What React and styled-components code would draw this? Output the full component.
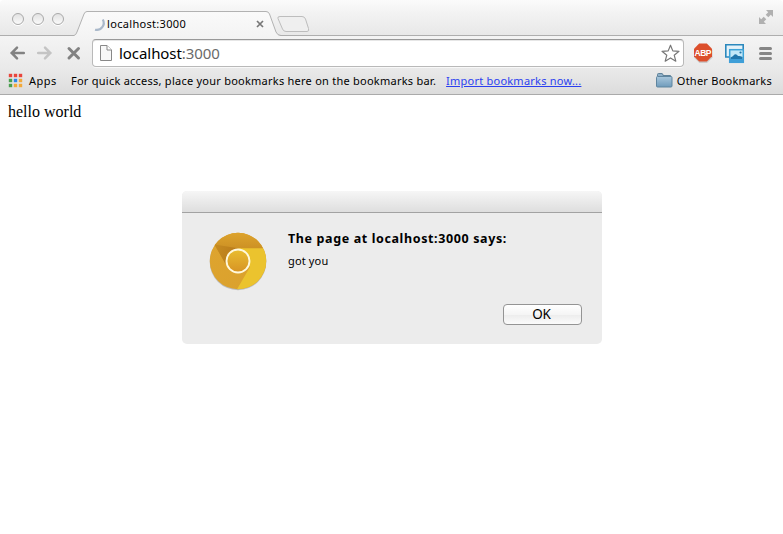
import React from "react";
import styled, { createGlobalStyle } from "styled-components";

const Global = createGlobalStyle`
  * { box-sizing: border-box; }
  html, body { margin: 0; background: #fff; overflow: hidden; }
  svg { display: block; flex: none; overflow: visible; }
`;

const Browser = styled.div`
  position: relative;
  display: flex;
  flex-direction: column;
  width: 783px;
  height: 534px;
  font-family: "Noto Sans", "Open Sans", sans-serif;
  color: #000;
`;

const Label = styled.span`
  font-size: ${(p) => p.$size || 11}px;
  font-weight: ${(p) => p.$weight || 400};
  letter-spacing: ${(p) => p.$track || 0}px;
  line-height: 16px;
  white-space: nowrap;
`;

const TabStrip = styled.header`
  display: flex;
  height: 36px;
  padding: 0 9px 0 12px;
  background: linear-gradient(#fbfbfb, #f3f3f3 35%, #e8e8e8);
  border-bottom: 1px solid #aeaeae;
  border-radius: 4px 4px 0 0;
`;

const WindowButtons = styled.div`
  display: flex;
  gap: 8px;
  padding-top: 13px;
  width: 62px;
`;

const WindowButton = styled.i`
  width: 12px;
  height: 12px;
  border: 1px solid #a9a9a9;
  border-radius: 50%;
  background: linear-gradient(#e2e2e2, #fafafa);
  box-shadow: 0 1px 0 #fff;
`;

const Tab = styled.div`
  position: relative;
  display: flex;
  width: 207px;
  height: 36px;
  padding: 16px 17px 0 19px;
`;

const TabShape = styled.svg`
  position: absolute;
  left: 0;
  top: 0;
`;

const TabContent = styled.div`
  position: relative;
  display: flex;
  width: 100%;
  height: 16px;
  align-items: center;
`;

const TabTitle = styled(Label)`
  flex: 1;
  margin-left: 2px;
`;

const NewTab = styled.svg`
  margin: 15px auto 0 -4px;
`;

const Expand = styled.svg`
  margin-top: 9px;
`;

const Toolbar = styled.div`
  display: flex;
  align-items: center;
  height: 34px;
  padding: 0 11px 0 9px;
  background: linear-gradient(#f4f4f4, #e9e9e9);
`;

const NavButtons = styled.div`
  display: flex;
  gap: 12px;
  width: 83px;
`;

const AddressBar = styled.div`
  display: flex;
  align-items: center;
  width: 592px;
  height: 28px;
  padding: 0 3px 0 7px;
  background: #fff;
  border: 1px solid #b9b9b9;
  border-top-color: #999;
  border-radius: 4px;
  box-shadow: inset 0 1px 0 #e6e6e6, 0 1px 0 #f8f8f8;
`;

const Url = styled(Label)`
  flex: 1;
  margin-left: 7px;
  line-height: 20px;
`;

const Port = styled.span`
  color: #6a6a6a;
`;

const Extensions = styled.div`
  display: flex;
  align-items: center;
  flex: 1;
  padding-left: 9px;
`;

const ExtensionPhotos = styled.svg`
  margin: 1px auto 0 12px;
`;

const BookmarksBar = styled.nav`
  display: flex;
  align-items: center;
  height: 25px;
  padding: 0 11px 3px 9px;
  background: linear-gradient(#e9e9e9, #dcdcdc);
  border-bottom: 1px solid #aaa;
`;

const AppsLabel = styled(Label)`
  width: 42px;
  margin-left: 7px;
`;

const ImportLink = styled.a`
  margin: 0 auto 0 10px;
  font-size: 11px;
  line-height: 16px;
  letter-spacing: ${(p) => p.$track}px;
  color: #2b3ff0;
  text-decoration: underline;
  white-space: nowrap;
`;

const FolderLabel = styled(Label)`
  margin-left: 4px;
`;

const Page = styled.main`
  flex: 1;
  padding: 8px;
  font: 16px/18px "Liberation Serif", serif;
`;

const Dialog = styled.section`
  position: absolute;
  left: 182px;
  top: 191px;
  width: 420px;
  height: 153px;
  background: #ececec;
  border-radius: 5px;
  overflow: hidden;
`;

const DialogTitleBar = styled.div`
  height: 22px;
  background: linear-gradient(#f6f6f6, #dedede);
  border-bottom: 1px solid #a2a2a2;
`;

const DialogBody = styled.div`
  display: flex;
  padding: 18px 20px 0 26px;
`;

const Message = styled.div`
  display: flex;
  flex-direction: column;
  flex: 1;
  gap: 6px;
  margin-left: 20px;
`;

const OkButton = styled.button`
  align-self: flex-end;
  width: 79px;
  height: 21px;
  margin-top: 29px;
  padding: 0 2px 1px 0;
  font: 13.5px/18px "Noto Sans", sans-serif;
  letter-spacing: -0.2px;
  color: #000;
  background: linear-gradient(#fff, #f5f5f5 50%, #ececec 51%, #fbfbfb);
  border: 1px solid #949494;
  border-radius: 4px;
`;

const APP_COLORS = [
  "#e8453c", "#e8453c", "#e8453c",
  "#4a9f4f", "#2f87e8", "#f2a93b",
  "#4a9f4f", "#f2a93b", "#f2a93b",
];

const AppsIcon = () => (
  <svg width="13" height="13">
    {APP_COLORS.map((c, i) => (
      <rect key={i} x={(i % 3) * 5 - 0.2} y={Math.floor(i / 3) * 5 - 0.2} width="3.4" height="3.4" fill={c} />
    ))}
  </svg>
);

const BackIcon = ({ color, flip }) => (
  <svg width="16" height="16" viewBox="0 0 16 16">
    <path
      transform={flip ? "translate(16 0) scale(-1 1)" : undefined}
      d="M8 2.700 2.700 8 8 13.300M3 8H14.800"
      fill="none" stroke={color} strokeWidth="2.500" strokeLinecap="round"
    />
  </svg>
);

const ChromeLogo = () => (
  <svg width="60" height="62" viewBox="0 0 60 62">
    <defs>
      <linearGradient id="top" x1="0" y1="0" x2="0" y2="1">
        <stop offset="0" stopColor="#dfa52d" />
        <stop offset="1" stopColor="#bd801d" />
      </linearGradient>
      <linearGradient id="left" x1="0" y1="0" x2="1" y2="1">
        <stop offset="0" stopColor="#dfa52f" />
        <stop offset="1" stopColor="#d9a02d" />
      </linearGradient>
      <linearGradient id="shade" x1="0" y1="0" x2="1" y2="0.2">
        <stop offset="0" stopColor="#c68c21" />
        <stop offset="1" stopColor="#b97b1a" />
      </linearGradient>
      <linearGradient id="core" x1="0" y1="0" x2="0" y2="1">
        <stop offset="0" stopColor="#e9bd30" />
        <stop offset="1" stopColor="#d79324" />
      </linearGradient>
      <clipPath id="disc"><circle cx="30" cy="30" r="28.2" /></clipPath>
    </defs>
    <circle cx="30" cy="30.9" r="28.3" fill="#000" opacity=".2" />
    <g clipPath="url(#disc)">
      <rect width="60" height="60" fill="url(#left)" />
      <path d="M30 16H60V60H28L42 36Z" fill="#ebc32e" />
      <path d="M0 0H60V17.300H30L17.500 32 6.400 13.500Z" fill="url(#top)" />
      <path d="M6.400 13.500 17.500 33 19 22 30 17.300Z" fill="url(#shade)" />
    </g>
    <circle cx="30" cy="30" r="11.500" fill="url(#core)" stroke="#fff8dc" strokeWidth="1.900" />
  </svg>
);

export default function App() {
  return (
    <>
      <Global />
      <Browser>
        <TabStrip>
          <WindowButtons>
            <WindowButton /><WindowButton /><WindowButton />
          </WindowButtons>
          <Tab>
            <TabShape width="207" height="36">
              <defs>
                <linearGradient id="tab" x1="0" y1="0" x2="0" y2="1">
                  <stop offset="0" stopColor="#fafafa" />
                  <stop offset="1" stopColor="#f4f4f4" />
                </linearGradient>
              </defs>
              <path d="M0 36V35.5Q2 35 3 32L10 14Q11 11.5 13 11.5H192Q194.500 11.500 195.500 14L202 32Q203.500 35.500 206 35.500V36Z" fill="url(#tab)" />
              <path d="M0 35.500Q2 35 3 32L10 14Q11 11.500 13 11.500H192Q194.500 11.500 195.500 14L202 32Q203.500 35.500 207 35.500" fill="none" stroke="#b2b2b2" />
            </TabShape>
            <TabContent>
              <svg width="12" height="16">
                <path d="M9.800 3.500A7 7 0 0 1 2 13.700" fill="none" stroke="#a9b8ca" strokeWidth="2.200" />
              </svg>
              <TabTitle $track={0.32}>localhost:3000</TabTitle>
              <svg width="8" height="8">
                <path d="M1 1 7 7M7 1 1 7" stroke="#777" strokeWidth="1.700" />
              </svg>
            </TabContent>
          </Tab>
          <NewTab width="33" height="18">
            <path d="M3 1.500H25Q27.500 1.500 28.500 4L31.500 13.500Q32.500 16.500 30 16.500H9Q6.500 16.500 5.500 14L1 3.500Q0.200 1.500 3 1.500Z" fill="#efefef" stroke="#bdbdbd" />
          </NewTab>
          <Expand width="16" height="16" viewBox="0 0 16 16">
            <path d="M8 1H15V8L12.800 5.800 10.300 8.300 7.700 5.700 10.200 3.200ZM1 8 3.200 10.200 5.700 7.700 8.300 10.300 5.800 12.800 8 15H1Z" fill="#b0b0b0" />
          </Expand>
        </TabStrip>
        <Toolbar>
          <NavButtons>
            <BackIcon color="#828282" />
            <BackIcon color="#c4c4c4" flip />
            <svg width="17" height="16">
              <path d="M4 3.500 13.500 13M13.500 3.500 4 13" stroke="#828282" strokeWidth="3" strokeLinecap="round" />
            </svg>
          </NavButtons>
          <AddressBar>
            <svg width="12" height="16">
              <path d="M.5.500H7L11.500 5V15.500H.500Z" fill="#f8f8f8" stroke="#888" />
              <path d="M7 .500V5H11.500" fill="#fff" stroke="#888" />
            </svg>
            <Url $size={15} $track={-0.06}>localhost<Port>:3000</Port></Url>
            <svg width="19" height="19" viewBox="0 0 19 19">
              <path d="M9.500 1.200 11.800 6.900 18 7.300 13.200 11.200 14.800 17.200 9.500 13.900 4.200 17.200 5.800 11.200 1 7.300 7.200 6.900Z" fill="#fff" stroke="#777" strokeWidth="1.200" strokeLinejoin="round" />
            </svg>
          </AddressBar>
          <Extensions>
            <svg width="20" height="20" viewBox="0 0 20 20">
              <path d="M6.500 1.500H14L19.500 7V14.500L14 20H6.500L1 14.500V7Z" fill="#aaa" opacity=".5" />
              <path d="M6.200.500H13.800L19 5.800V13.200L13.800 18.500H6.200L1 13.200V5.800Z" fill="#dc4f2c" />
              <text x="9.700" y="12.700" textAnchor="middle" fontFamily="Liberation Sans, sans-serif" fontWeight="700" fontSize="8.500" letterSpacing="-0.600" fill="#fff">ABP</text>
            </svg>
            <ExtensionPhotos width="20" height="20" viewBox="0 0 20 20">
              <path d="M.8.800H18.200V13H.800Z" fill="#e4f2f9" stroke="#2b88bd" strokeWidth="1.600" />
              <rect x="4.700" y="5.700" width="13.600" height="12.600" fill="#c3e8f8" stroke="#3da3d8" strokeWidth="1.500" />
              <path d="M5.500 13.500Q8 12.500 9.500 10.500Q11.500 9.500 13 12Q15 11.500 17.500 13V15H5.500Z" fill="#2176ac" />
              <circle cx="15.500" cy="8.500" r="1.100" fill="#2176ac" />
              <path d="M4 15H19V19H4Z" fill="#3f9fd8" />
            </ExtensionPhotos>
            <svg width="13" height="14">
              <path d="M1.500 2.500H11.500M1.500 7.500H11.500M1.500 12.500H11.500" stroke="#858585" strokeWidth="3" strokeLinecap="round" />
            </svg>
          </Extensions>
        </Toolbar>
        <BookmarksBar>
          <AppsIcon />
          <AppsLabel $track={0.45}>Apps</AppsLabel>
          <Label $track={0.245}>For quick access, place your bookmarks here on the bookmarks bar.</Label>
          <ImportLink $track={0.23}>Import bookmarks now...</ImportLink>
          <svg width="17" height="15">
            <defs>
              <linearGradient id="folder" x1="0" y1="0" x2="0" y2="1">
                <stop offset="0" stopColor="#a9c7dc" />
                <stop offset="1" stopColor="#6f9bbb" />
              </linearGradient>
            </defs>
            <path d="M1.500 3V1.500Q1.500.500 2.500.500H6Q7 .500 7 2.500H14.500V4" fill="#8fb0c8" stroke="#5f8299" />
            <rect x=".5" y="3.500" width="15.500" height="10.500" rx="1" fill="url(#folder)" stroke="#5f859f" />
          </svg>
          <FolderLabel $track={0.25}>Other Bookmarks</FolderLabel>
        </BookmarksBar>
        <Page>hello world</Page>
        <Dialog>
          <DialogTitleBar />
          <DialogBody>
            <ChromeLogo />
            <Message>
              <Label $size={12.5} $weight={700} $track={0.62}>The page at localhost:3000 says:</Label>
              <Label $track={0.15}>got you</Label>
              <OkButton>OK</OkButton>
            </Message>
          </DialogBody>
        </Dialog>
      </Browser>
    </>
  );
}
